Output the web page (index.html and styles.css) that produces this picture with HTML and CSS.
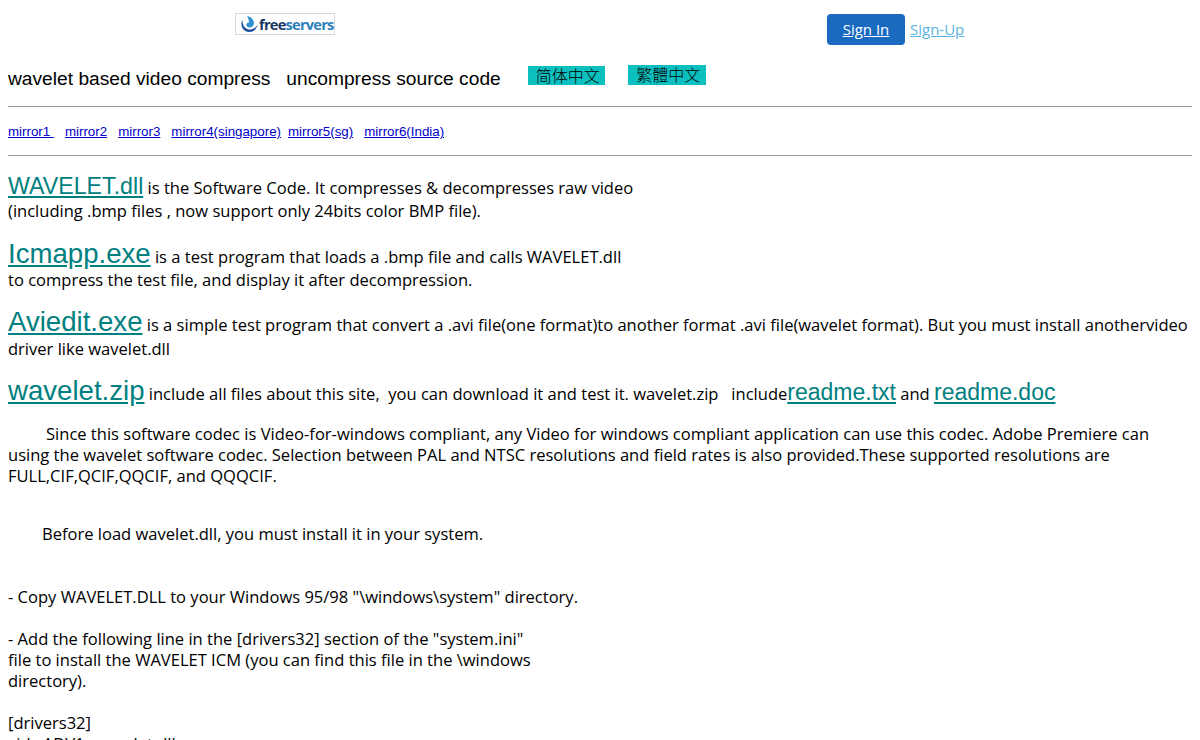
FILE: index.html
```html
<!DOCTYPE html>
<html lang="en">
<head>
<meta charset="utf-8">
<title>wavelet based video compress uncompress source code</title>
<link rel="stylesheet" href="styles.css">
</head>
<body>
<header class="topbar">
  <a class="logo" href="#">
    <svg class="logo-mark" viewBox="0 0 20 20" width="20" height="19" aria-hidden="true">
      <path d="M3 5 C0 11 4 18 10 18 C15 18 18 15 19 10 C17 14 13 16 9 15 C5 14 3 10 3 5Z" fill="#1c4f9c"/>
      <path d="M8 1 C13 2 16 6 15 10 C14 13 10 14 8 12 C6 10 8 8 10 8 C10 5 9 3 8 1Z" fill="#2f8fd0"/>
    </svg>
    <span class="logo-free">free</span><span class="logo-servers">servers</span>
  </a>
  <div class="auth">
    <a class="signin" href="#">Sign In</a>
    <a class="signup" href="#">Sign-Up</a>
  </div>
</header>
<h1 class="title">
  <span class="title-text">wavelet based video compress&nbsp;&nbsp; uncompress source code</span>
  <a class="chip chip-a" href="#">简体中文</a>
  <a class="chip chip-b" href="#">繁體中文</a>
</h1>
<hr class="rule rule-first">
<nav class="mirrors">
  <a href="#">mirror1&nbsp;</a>
  <a href="#">mirror2</a>
  <a href="#">mirror3</a>
  <a class="tight" href="#">mirror4(singapore)</a>
  <a href="#">mirror5(sg)</a>
  <a href="#">mirror6(India)</a>
</nav>
<hr class="rule rule-second">
<main class="content">
  <p class="item first"><a class="big b23" href="#">WAVELET.dll</a> is the Software Code. It compresses &amp; decompresses raw video<br>(including .bmp files , now support only 24bits color BMP file).</p>
  <p class="item"><a class="big b27" href="#">Icmapp.exe</a> is a test program that loads a .bmp file and calls WAVELET.dll<br>to compress the test file, and display it after decompression.</p>
  <p class="item"><a class="big b27" href="#">Aviedit.exe</a> is a simple test program that convert a .avi file(one format)to another format .avi file(wavelet format). But you must install anothervideo driver like wavelet.dll</p>
  <p class="item"><a class="big b27" href="#">wavelet.zip</a> include all files about this site,&nbsp; you can download it and test it. wavelet.zip&nbsp;&nbsp; include<a class="big b22" href="#">readme.txt</a> and <a class="big b22" href="#">readme.doc</a></p>
  <p class="para since">Since this software codec is Video-for-windows compliant, any Video for windows compliant application can use this codec. Adobe Premiere can using the wavelet software codec. Selection between PAL and NTSC resolutions and field rates is also provided.These supported resolutions are FULL,CIF,QCIF,QQCIF, and QQQCIF.</p>
  <p class="para before">Before load wavelet.dll, you must install it in your system.</p>
  <p class="para copy">- Copy WAVELET.DLL to your Windows 95/98 "\windows\system" directory.</p>
  <p class="para add">- Add the following line in the [drivers32] section of the "system.ini"<br>file to install the WAVELET ICM (you can find this file in the \windows<br>directory).</p>
  <p class="para add">[drivers32]<br>vidc.ADV1=wavelet.dll</p>
</main>
</body>
</html>
```
FILE: styles.css
```css
html, body { height: 740px; overflow: hidden; }
body {
  margin: 0;
  padding: 0 8px;
  background: #fff;
  color: #000;
  font-family: "Open Sans", "Noto Sans", sans-serif;
  font-size: 16.55px;
  line-height: 21px;
}
.topbar { display: flex; align-items: flex-start; height: 56px; }
.logo {
  display: flex;
  align-items: center;
  flex: none;
  width: 100px;
  height: 22px;
  margin: 13px 0 0 227px;
  padding-left: 3px;
  box-sizing: border-box;
  border: 1px solid #d5d8dc;
  overflow: hidden;
  text-decoration: none;
  font-family: "Open Sans", sans-serif;
  font-size: 14.6px;
  font-weight: 700;
  letter-spacing: -0.75px;
}
.logo-mark { flex: none; }
.logo-free { color: #17365f; }
.logo-servers { color: #2c7fb8; }
.auth { display: flex; align-items: center; margin: 14px 0 0 492px; gap: 5px; }
.signin {
  display: block;
  width: 78px;
  height: 31px;
  line-height: 31px;
  text-align: center;
  background: #1a6bc0;
  border-radius: 4px;
  color: #fff;
  font-size: 15px;
}
.signup { color: #5ab5dd; font-size: 15px; }
.title {
  display: flex;
  align-items: flex-start;
  height: 32px;
  margin: 0;
  font-family: "Liberation Sans", Arial, sans-serif;
  font-size: 19.2px;
  font-weight: 400;
  line-height: 22px;
}
.title-text { margin-top: 12px; }
.chip {
  display: block;
  width: 77px;
  height: 19px;
  padding-left: 3px;
  box-sizing: border-box;
  background: #0cc0c0;
  color: #000;
  text-align: center;
  text-decoration: none;
  font-family: "Noto Sans CJK SC", sans-serif;
  font-size: 16px;
  line-height: 19px;
  font-weight: 300;
}
.chip-a { margin: 10px 0 0 27px; }
.chip-b { margin: 9px 0 0 23px; width: 78px; height: 20px; }
.rule { height: 0; margin: 0; border: 0; border-top: 1px solid #9a9a9a; }
.rule-first { margin-top: 18px; }
.mirrors {
  display: flex;
  height: 48px;
  padding-top: 15px;
  box-sizing: border-box;
  font-family: "Liberation Sans", Arial, sans-serif;
  font-size: 13.33px;
  line-height: 20px;
}
.mirrors a { color: #0000cc; margin-right: 11px; }
.mirrors a.tight { margin-right: 7px; }
.content { padding-top: 17px; }
.item { margin: 0 0 16px; }
.first { margin-bottom: 17px; }
.big { font-family: "Liberation Sans", Arial, sans-serif; color: #008080; line-height: 1.15; }
.b23 { font-size: 23.2px; }
.b27 { font-size: 27.6px; }
.b22 { font-size: 23px; }
.para { margin: 0 0 37px; }
.since { text-indent: 38px; }
.before { margin-bottom: 42px; text-indent: 34px; }
.copy { margin-bottom: 21px; }
.add { margin-bottom: 21px; }
```
